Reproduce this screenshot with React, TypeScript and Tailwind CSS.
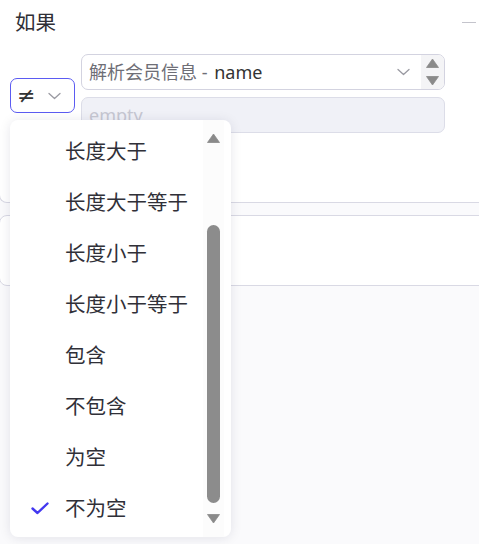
import React from "react";

const Chevron = ({ className = "" }: { className?: string }) => (
  <svg className={className} width="13" height="8" viewBox="0 0 13 8" fill="none">
    <polyline points="1,1.5 6.5,6.5 12,1.5" stroke="#9a9aa2" strokeWidth="1.3" strokeLinecap="round" strokeLinejoin="round" />
  </svg>
);

const TriUp = () => (
  <svg width="13" height="10" viewBox="0 0 13 10">
    <path d="M6.5 1 L12.5 9.5 L0.5 9.5 Z" fill="#8a8a8a" stroke="#8a8a8a" strokeWidth="0.8" strokeLinejoin="round" />
  </svg>
);

const TriDown = () => (
  <svg width="13" height="10" viewBox="0 0 13 10">
    <path d="M0.5 0.5 L12.5 0.5 L6.5 9 Z" fill="#8a8a8a" stroke="#8a8a8a" strokeWidth="0.8" strokeLinejoin="round" />
  </svg>
);

const items = ["长度大于", "长度大于等于", "长度小于", "长度小于等于", "包含", "不包含", "为空", "不为空"];

export default function App() {
  return (
    <div
      className="relative w-[479px] h-[544px] overflow-hidden bg-[#fafafc]"
      style={{ fontFamily: '"Noto Sans", "Noto Sans CJK SC", sans-serif' }}
    >
      {/* Card 1 */}
      <div className="ml-[-1px] w-[500px] h-[203px] bg-white border-l border-b border-[#d9d9e4] rounded-bl-[8px]">
        <div className="h-[44px] w-[479px] flex items-center justify-between pl-[15px] pr-[3px]">
          <span className="text-[20.5px] leading-none text-[#2f2f36]">如果</span>
          <div className="w-[14px] h-[1.5px] bg-[#c4c4cc] mt-[1px]" />
        </div>
        <div className="flex mt-[10px] pl-[10px]">
          <div className="mt-[24px] w-[65px] h-[35px] border border-[#5b5bf2] rounded-[7px] flex items-center pl-[6px]">
            <span className="text-[22px] leading-none text-[#333]" style={{ fontFamily: '"DejaVu Sans", sans-serif' }}>≠</span>
            <Chevron className="ml-[13px]" />
          </div>
          <div className="ml-[6px] w-[364px] flex flex-col gap-[7px]">
            <div className="h-[36px] border border-[#d3d3e0] rounded-[7px] flex items-center overflow-hidden bg-white">
              <span className="pl-[7px] text-[18px] leading-none text-[#6e6e76] whitespace-nowrap">
                解析会员信息 - <span className="ml-[2px] text-[#333]">name</span>
              </span>
              <Chevron className="ml-auto mr-[11px]" />
              <div className="w-[23px] h-full bg-[#f4f4f6] flex flex-col items-center justify-center gap-[8px]">
                <TriUp />
                <TriDown />
              </div>
            </div>
            <div className="h-[36px] border border-[#dcdde8] rounded-[7px] bg-[#f0f1f7] flex items-center pl-[7px]">
              <span className="text-[18px] leading-none text-[#c6c7d2]">empty</span>
            </div>
          </div>
        </div>
      </div>

      {/* Card 2 */}
      <div className="mt-[12px] ml-[-1px] w-[500px] h-[71px] bg-white border border-[#d9d9e4] rounded-l-[8px]" />

      {/* Dropdown */}
      <div className="absolute left-[10px] top-[120px] w-[221px] h-[417px] bg-white rounded-[8px] shadow-[0_1px_12px_rgba(20,20,60,0.10)] flex overflow-hidden">
        <div className="flex-1 pt-[6px]">
          {items.map((t, i) => (
            <div key={t} className="h-[51px] flex items-center">
              <div className="w-[55px] pl-[21px] flex items-center">
                {i === items.length - 1 && (
                  <svg width="18" height="13" viewBox="0 0 18 13" fill="none">
                    <polyline points="1.5,6.5 6.5,11 16.5,1.5" stroke="#4338f0" strokeWidth="2.4" strokeLinecap="round" strokeLinejoin="round" />
                  </svg>
                )}
              </div>
              <span className="text-[20.5px] leading-none text-[#303038] whitespace-nowrap">{t}</span>
            </div>
          ))}
        </div>
        <div className="w-[21px] mr-[7px] flex flex-col items-center pt-[13px] bg-[#fcfcfc]">
          <TriUp />
          <div className="mt-[82px] w-[13px] h-[278px] rounded-full bg-[#8c8c8c]" />
          <div className="mt-[11px]">
            <TriDown />
          </div>
        </div>
      </div>
    </div>
  );
}
